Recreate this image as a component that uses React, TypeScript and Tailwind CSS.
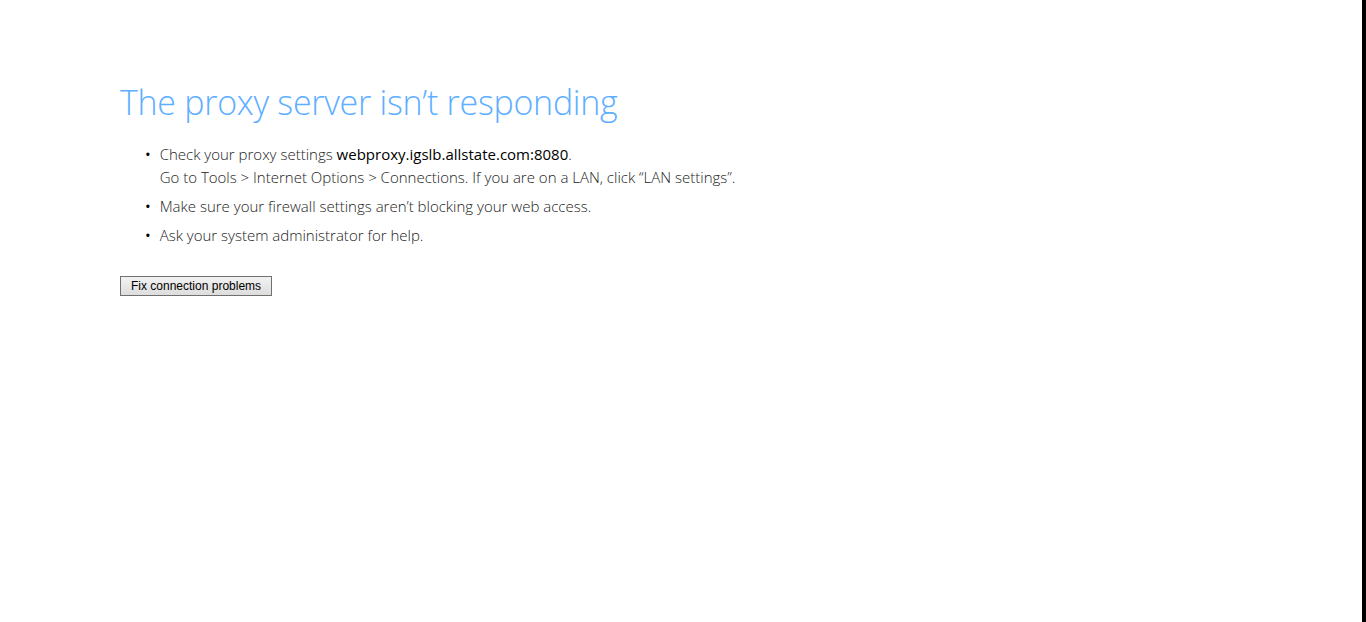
import React from "react";

export default function App() {
  return (
    <div className="flex h-[622px] w-full bg-white">
      <div className="flex-1 pl-[120px] pt-[78px]">
        <h1 className="text-[34px] font-light leading-[48px] tracking-[-0.28px] text-[#5eafff] [font-family:'Open_Sans',sans-serif]">
          The proxy server isn’t responding
        </h1>

        <ul className="mt-[17px] pl-[25px] text-[15px] font-light text-[#222] [font-family:'Open_Sans',sans-serif]">
          <li className="flex gap-[9px] leading-[23px]">
            <span className="font-normal text-black">•</span>
            <div>
              <div>
                Check your proxy settings{" "}
                <span className="font-normal text-black">webproxy.igslb.allstate.com:8080</span>.
              </div>
              <div>Go to Tools &gt; Internet Options &gt; Connections. If you are on a LAN, click “LAN settings”.</div>
            </div>
          </li>
          <li className="mt-[6px] flex gap-[9px] leading-[23px]">
            <span className="font-normal text-black">•</span>
            <div>Make sure your firewall settings aren’t blocking your web access.</div>
          </li>
          <li className="mt-[6px] flex gap-[9px] leading-[23px]">
            <span className="font-normal text-black">•</span>
            <div>Ask your system administrator for help.</div>
          </li>
        </ul>

        <button className="mt-[29px] h-[20px] border border-[#707070] bg-gradient-to-b from-[#f2f2f2] to-[#dddddd] px-[10px] text-[12px] leading-[18px] text-black [font-family:'Liberation_Sans',sans-serif]">
          Fix connection problems
        </button>
      </div>
      <div className="w-[4px] bg-black" />
    </div>
  );
}
